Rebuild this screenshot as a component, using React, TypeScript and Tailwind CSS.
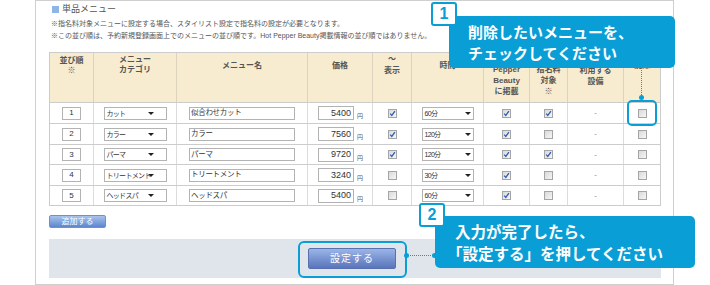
import React from "react";

type Row = {
  n: number;
  cat: string;
  name: string;
  price: string;
  show: boolean;
  time: string;
  hpb: boolean;
  shimei: boolean;
};

const rows: Row[] = [
  { n: 1, cat: "カット", name: "似合わせカット", price: "5400", show: true, time: "60分", hpb: true, shimei: true },
  { n: 2, cat: "カラー", name: "カラー", price: "7560", show: true, time: "120分", hpb: true, shimei: false },
  { n: 3, cat: "パーマ", name: "パーマ", price: "9720", show: true, time: "120分", hpb: true, shimei: true },
  { n: 4, cat: "トリートメント", name: "トリートメント", price: "3240", show: false, time: "30分", hpb: true, shimei: false },
  { n: 5, cat: "ヘッドスパ", name: "ヘッドスパ", price: "5400", show: false, time: "60分", hpb: true, shimei: false },
];

// heights include the bottom border line
const rowHeights = ["h-[21px] border-b", "h-[21px] border-b", "h-[20px] border-b", "h-[21px] border-b", "h-[19px]"];

const cols = "grid grid-cols-[44px_83px_131px_65px_39px_72px_46px_38px_56px_36px]";

function Check({ on }: { on?: boolean }) {
  return (
    <span className="relative block w-[9px] h-[9px] border border-[#a5a5a5] bg-linear-to-br from-[#d9d9d9] to-[#f6f6f6]">
      {on && (
        <svg viewBox="0 0 9 9" className="absolute -left-px -top-px w-[9px] h-[9px]">
          <path d="M2.2 4.6 L3.8 6.4 L6.9 2.2" fill="none" stroke="#2f5fb3" strokeWidth="1.3" />
        </svg>
      )}
    </span>
  );
}

function Select({ value, w, arrow }: { value: string; w: string; arrow: string }) {
  return (
    <div className={`relative ${w} h-[13px] border border-[#b3b3b3] bg-white flex items-center pl-[2px] text-[7px] text-[#333]`}>
      <span className="leading-none whitespace-nowrap tracking-[-0.7px]">{value}</span>
      <span className={`absolute ${arrow} top-[4px] w-0 h-0 border-x-[3px] border-x-transparent border-t-[3px] border-t-[#222]`} />
    </div>
  );
}

function Cell({ children, last }: { children?: React.ReactNode; last?: boolean }) {
  return (
    <div className={`flex items-center justify-center ${last ? "" : "border-r border-[#dcdcdc]"}`}>{children}</div>
  );
}

function Head({ lines, pt, lh, last }: { lines: string[]; pt: string; lh: string; last?: boolean }) {
  return (
    <div className={`flex flex-col items-center ${pt} ${lh} ${last ? "" : "border-r border-[#dcd3bf]"}`}>
      {lines.map((l, i) => (
        <span key={i}>{l}</span>
      ))}
    </div>
  );
}

export default function App() {
  return (
    <div className="relative w-[710px] h-[285px] overflow-hidden bg-white font-['Liberation_Sans','Noto_Sans_CJK_JP',sans-serif]">
      <div className="ml-[35px] w-[639px] h-[285px] border border-[#cfcfcf] pl-[13px] pr-[12px]">
        {/* title */}
        <div className="h-[17px] flex items-center gap-[3px] pl-[3px]">
          <span className="w-[7px] h-[7px] bg-[#8fb5e6]" />
          <span className="text-[9px] text-[#555]">単品メニュー</span>
        </div>
        <div className="pl-[2px] text-[7px] leading-[12px] text-[#555]">
          <p>※指名料対象メニューに設定する場合、スタイリスト設定で指名料の設定が必要となります。</p>
          <p>※この並び順は、予約新規登録画面上でのメニューの並び順です。Hot Pepper Beauty掲載情報の並び順ではありません。</p>
        </div>

        {/* table */}
        <div className="mt-[10px] w-[612px] border border-[#cccccc]">
          <div className={`${cols} h-[50px] border-b border-[#cccccc] bg-[#f7ecd0] text-[8px] font-bold text-[#555]`}>
            <Head lines={["並び順", "※"]} pt="pt-[3px]" lh="leading-[10px]" />
            <Head lines={["メニュー", "カテゴリ"]} pt="pt-[2px]" lh="leading-[10px]" />
            <Head lines={["メニュー名"]} pt="pt-[8px]" lh="leading-[10px]" />
            <Head lines={["価格"]} pt="pt-[8px]" lh="leading-[10px]" />
            <Head lines={["〜", "表示"]} pt="pt-0" lh="leading-[12px]" />
            <Head lines={["時間"]} pt="pt-[8px]" lh="leading-[10px]" />
            <Head lines={["Pepper", "Beauty", "に掲載"]} pt="pt-[11px]" lh="leading-[11px]" />
            <Head lines={["指名料", "対象", "※"]} pt="pt-[11px]" lh="leading-[11px]" />
            <Head lines={["利用する", "設備"]} pt="pt-[12px]" lh="leading-[11px]" />
            <Head lines={["削除"]} pt="pt-[7px]" lh="leading-[11px]" last />
          </div>
          {rows.map((r, i) => (
            <div key={r.n} className={`${cols} ${rowHeights[i]} border-[#cccccc] text-[8px] text-[#333]`}>
              <Cell>
                <div className="w-[19px] h-[13px] border border-[#b3b3b3] flex items-center justify-center text-[8px] leading-none">
                  {r.n}
                </div>
              </Cell>
              <Cell>
                <Select value={r.cat} w="w-[63px]" arrow="right-[12px]" />
              </Cell>
              <Cell>
                <div className="w-[106px] h-[13px] border border-[#b3b3b3] flex items-center pl-[1px] leading-none text-[7.5px] tracking-[-0.3px]">
                  {r.name}
                </div>
              </Cell>
              <Cell>
                <div className="flex items-end gap-[3px] ml-[1px]">
                  <div className="w-[36px] h-[14px] border border-[#b3b3b3] flex items-center justify-end pr-[2px] text-[9px] leading-none">
                    {r.price}
                  </div>
                  <span className="text-[6px] leading-[8px] text-[#555]">円</span>
                </div>
              </Cell>
              <Cell>
                <Check on={r.show} />
              </Cell>
              <Cell>
                <Select value={r.time} w="w-[52px]" arrow="right-[2px]" />
              </Cell>
              <Cell>
                <Check on={r.hpb} />
              </Cell>
              <Cell>
                <Check on={r.shimei} />
              </Cell>
              <Cell>
                <span className="text-[#888]">-</span>
              </Cell>
              <Cell last>
                <Check />
              </Cell>
            </div>
          ))}
        </div>

        <button className="mt-[9px] block w-[57px] h-[13px] rounded-[2px] border border-[#6e90cc] bg-linear-to-b from-[#a9c4ec] to-[#5d86cf] text-[8px] leading-none text-white">
          追加する
        </button>

        <div className="mt-[11px] w-[612px] h-[39px] bg-[#e0e4eb] flex items-center justify-center pr-[6px]">
          <button className="w-[88px] h-[21px] rounded-[2px] border border-[#5670b0] bg-linear-to-b from-[#9ab6e7] to-[#5a74bb] text-[10px] leading-none text-white tracking-[1px]">
            設定する
          </button>
        </div>
      </div>

      {/* callout 1 */}
      <div className="absolute left-[627px] top-[100px] w-[30px] h-[26px] border-2 border-[#0a9ed6] rounded-[5px]" />
      <div className="absolute left-[641px] top-[68px] h-[29px] border-l border-dotted border-[#0a9ed6]" />
      <div className="absolute left-[639px] top-[95px] w-[5px] h-[5px] rounded-full bg-[#0a9ed6]" />
      <div className="absolute left-[449px] top-[16px] w-[226px] h-[52px] rounded-[5px] bg-[#0a9ed6] pl-[19px] pt-[5px] text-[15px] leading-[21px] font-bold text-white font-['Noto_Sans_CJK_JP',sans-serif]">
        <p>削除したいメニューを、</p>
        <p>チェックしてください</p>
      </div>
      <div className="absolute left-[431px] top-[2px] w-[26px] h-[24px] rounded-[3px] border-2 border-[#0a9ed6] bg-white flex items-center justify-center text-[16px] font-bold text-[#0a9ed6]">
        1
      </div>

      {/* callout 2 */}
      <div className="absolute left-[298px] top-[241px] w-[109px] h-[37px] border-2 border-[#0a9ed6] rounded-[6px]" />
      <div className="absolute left-[407px] top-[255px] w-[28px] border-t border-dotted border-[#0a9ed6]" />
      <div className="absolute left-[404px] top-[253px] w-[5px] h-[5px] rounded-full bg-[#0a9ed6]" />
      <div className="absolute left-[432px] top-[253px] w-[5px] h-[5px] rounded-full bg-[#0a9ed6]" />
      <div className="absolute left-[435px] top-[216px] w-[260px] h-[52px] rounded-[5px] bg-[#0a9ed6] pl-[20px] pt-[4px] text-[15.5px] leading-[22px] font-bold text-white font-['Noto_Sans_CJK_JP',sans-serif]">
        <p>入力が完了したら、</p>
        <p className="-ml-[8px]">「設定する」を押してください</p>
      </div>
      <div className="absolute left-[419px] top-[203px] w-[26px] h-[24px] rounded-[3px] border-2 border-[#0a9ed6] bg-white flex items-center justify-center text-[16px] font-bold text-[#0a9ed6]">
        2
      </div>
    </div>
  );
}
